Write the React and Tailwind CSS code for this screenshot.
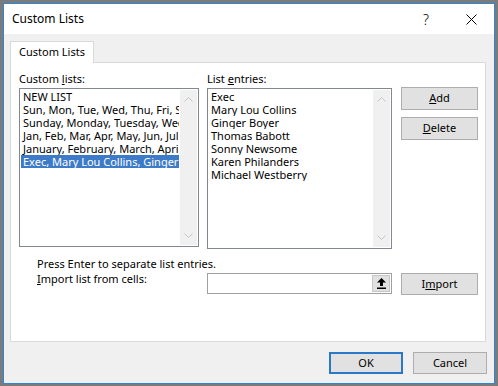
const customLists = [
  'NEW LIST',
  'Sun, Mon, Tue, Wed, Thu, Fri, Sat',
  'Sunday, Monday, Tuesday, Wed',
  'Jan, Feb, Mar, Apr, May, Jun, Jul',
  'January, February, March, April',
  'Exec, Mary Lou Collins, Ginger',
]

const entries = [
  'Exec',
  'Mary Lou Collins',
  'Ginger Boyer',
  'Thomas Babott',
  'Sonny Newsome',
  'Karen Philanders',
  'Michael Westberry',
]

function Chevron({ up }) {
  return (
    <svg width="9" height="5" viewBox="0 0 9 5" className="block">
      <polyline
        points={up ? '0.5,4.5 4.5,0.5 8.5,4.5' : '0.5,0.5 4.5,4.5 8.5,0.5'}
        fill="none"
        stroke="#c4c4c4"
        strokeWidth="1"
      />
    </svg>
  )
}

function ScrollTrack() {
  return (
    <div className="w-[17px] h-full bg-[#f0f0f0] flex flex-col items-center justify-between py-[7px] shrink-0">
      <Chevron up />
      <Chevron />
    </div>
  )
}

function ListBox({ items, selected, className }) {
  return (
    <div className={`border border-[#828790] bg-white p-px flex ${className}`}>
      <div className="flex-1 min-w-0 overflow-hidden pr-px">
        {items.map((item, i) => (
          <div
            key={item}
            className={`h-[13px] leading-[13px] pl-[2px] whitespace-nowrap overflow-hidden ${
              i === selected ? 'bg-[#3d7bc8] text-white' : ''
            }`}
          >
            {item}
          </div>
        ))}
      </div>
      <ScrollTrack />
    </div>
  )
}

function Button({ children, className = '' }) {
  return (
    <button className={`w-[77px] bg-[#e1e1e1] border border-[#adadad] text-[11px] text-black ${className}`}>
      {children}
    </button>
  )
}

export default function App() {
  return (
    <div className="w-[498px] h-[386px] bg-[#7b7b7b] pt-[3px] pl-[3px] font-['Noto_Sans',sans-serif] text-black text-[11px]">
      <div className="w-[492px] h-[381px] border border-[#2b88d8] bg-[#f0f0f0] flex flex-col">
        {/* title bar */}
        <div className="h-[30px] bg-white flex items-center shrink-0">
          <div className="flex-1 pl-[8px] text-[12px]">Custom Lists</div>
          <div className="w-[44px] text-center text-[14px] font-light">?</div>
          <div className="w-[46px] flex justify-center">
            <svg width="11" height="11" viewBox="0 0 11 11">
              <path d="M0.5 0.5 L10.5 10.5 M10.5 0.5 L0.5 10.5" stroke="#000" strokeWidth="1" />
            </svg>
          </div>
        </div>

        {/* body */}
        <div className="flex-1 pl-[6px] pt-[7px]">
          <div className="w-[84px] h-[22px] -mb-px relative bg-white border border-b-0 border-[#d9d9d9] pl-[8px] leading-[20px]">
            Custom Lists
          </div>
          <div className="w-[476px] h-[280px] border border-[#d9d9d9] bg-white pt-[8px] pl-[8px]">
            <div className="flex">
              <div>
                <div className="h-[15px] leading-[15px] mb-[2px]">
                  Custom <span className="underline">l</span>ists:
                </div>
                <ListBox items={customLists} selected={5} className="w-[180px] h-[159px]" />
              </div>
              <div className="ml-[8px]">
                <div className="h-[15px] leading-[15px] mb-[2px]">
                  List <span className="underline">e</span>ntries:
                </div>
                <ListBox items={entries} selected={-1} className="w-[185px] h-[161px]" />
              </div>
              <div className="ml-[9px] mt-[16px] flex flex-col gap-[7px]">
                <Button className="h-[23px]">
                  <span className="underline">A</span>dd
                </Button>
                <Button className="h-[23px]">
                  <span className="underline">D</span>elete
                </Button>
              </div>
            </div>

            <div className="ml-[18px] mt-[8px]">
              <div className="h-[14px] leading-[14px]">Press Enter to separate list entries.</div>
              <div className="flex items-start">
                <div className="w-[170px] leading-[15px]">
                  <span className="underline">I</span>mport list from cells:
                </div>
                <div className="mt-[2px] w-[185px] h-[21px] border border-[#a0a0a0] bg-white flex justify-end p-px">
                  <div className="w-[18px] h-full bg-[#e1e1e1] border border-[#c6c6c6] flex items-center justify-center">
                    <svg width="9" height="11" viewBox="0 0 9 11">
                      <polygon points="4.5,0 0,4.5 9,4.5" fill="#000" />
                      <rect x="3" y="4" width="3" height="4" fill="#000" />
                      <rect x="0" y="9.5" width="9" height="1.5" fill="#000" />
                    </svg>
                  </div>
                </div>
                <Button className="h-[22px] mt-[2px] ml-[9px]">
                  I<span className="underline">m</span>port
                </Button>
              </div>
            </div>
          </div>

          {/* footer */}
          <div className="flex justify-end gap-[10px] pr-[7px] mt-[10px]">
            <button className="w-[74px] h-[22px] bg-[#e1e1e1] border-2 border-[#2b78c8] text-[11px]">OK</button>
            <button className="w-[74px] h-[22px] bg-[#e1e1e1] border border-[#adadad] text-[11px]">Cancel</button>
          </div>
        </div>
      </div>
    </div>
  )
}
